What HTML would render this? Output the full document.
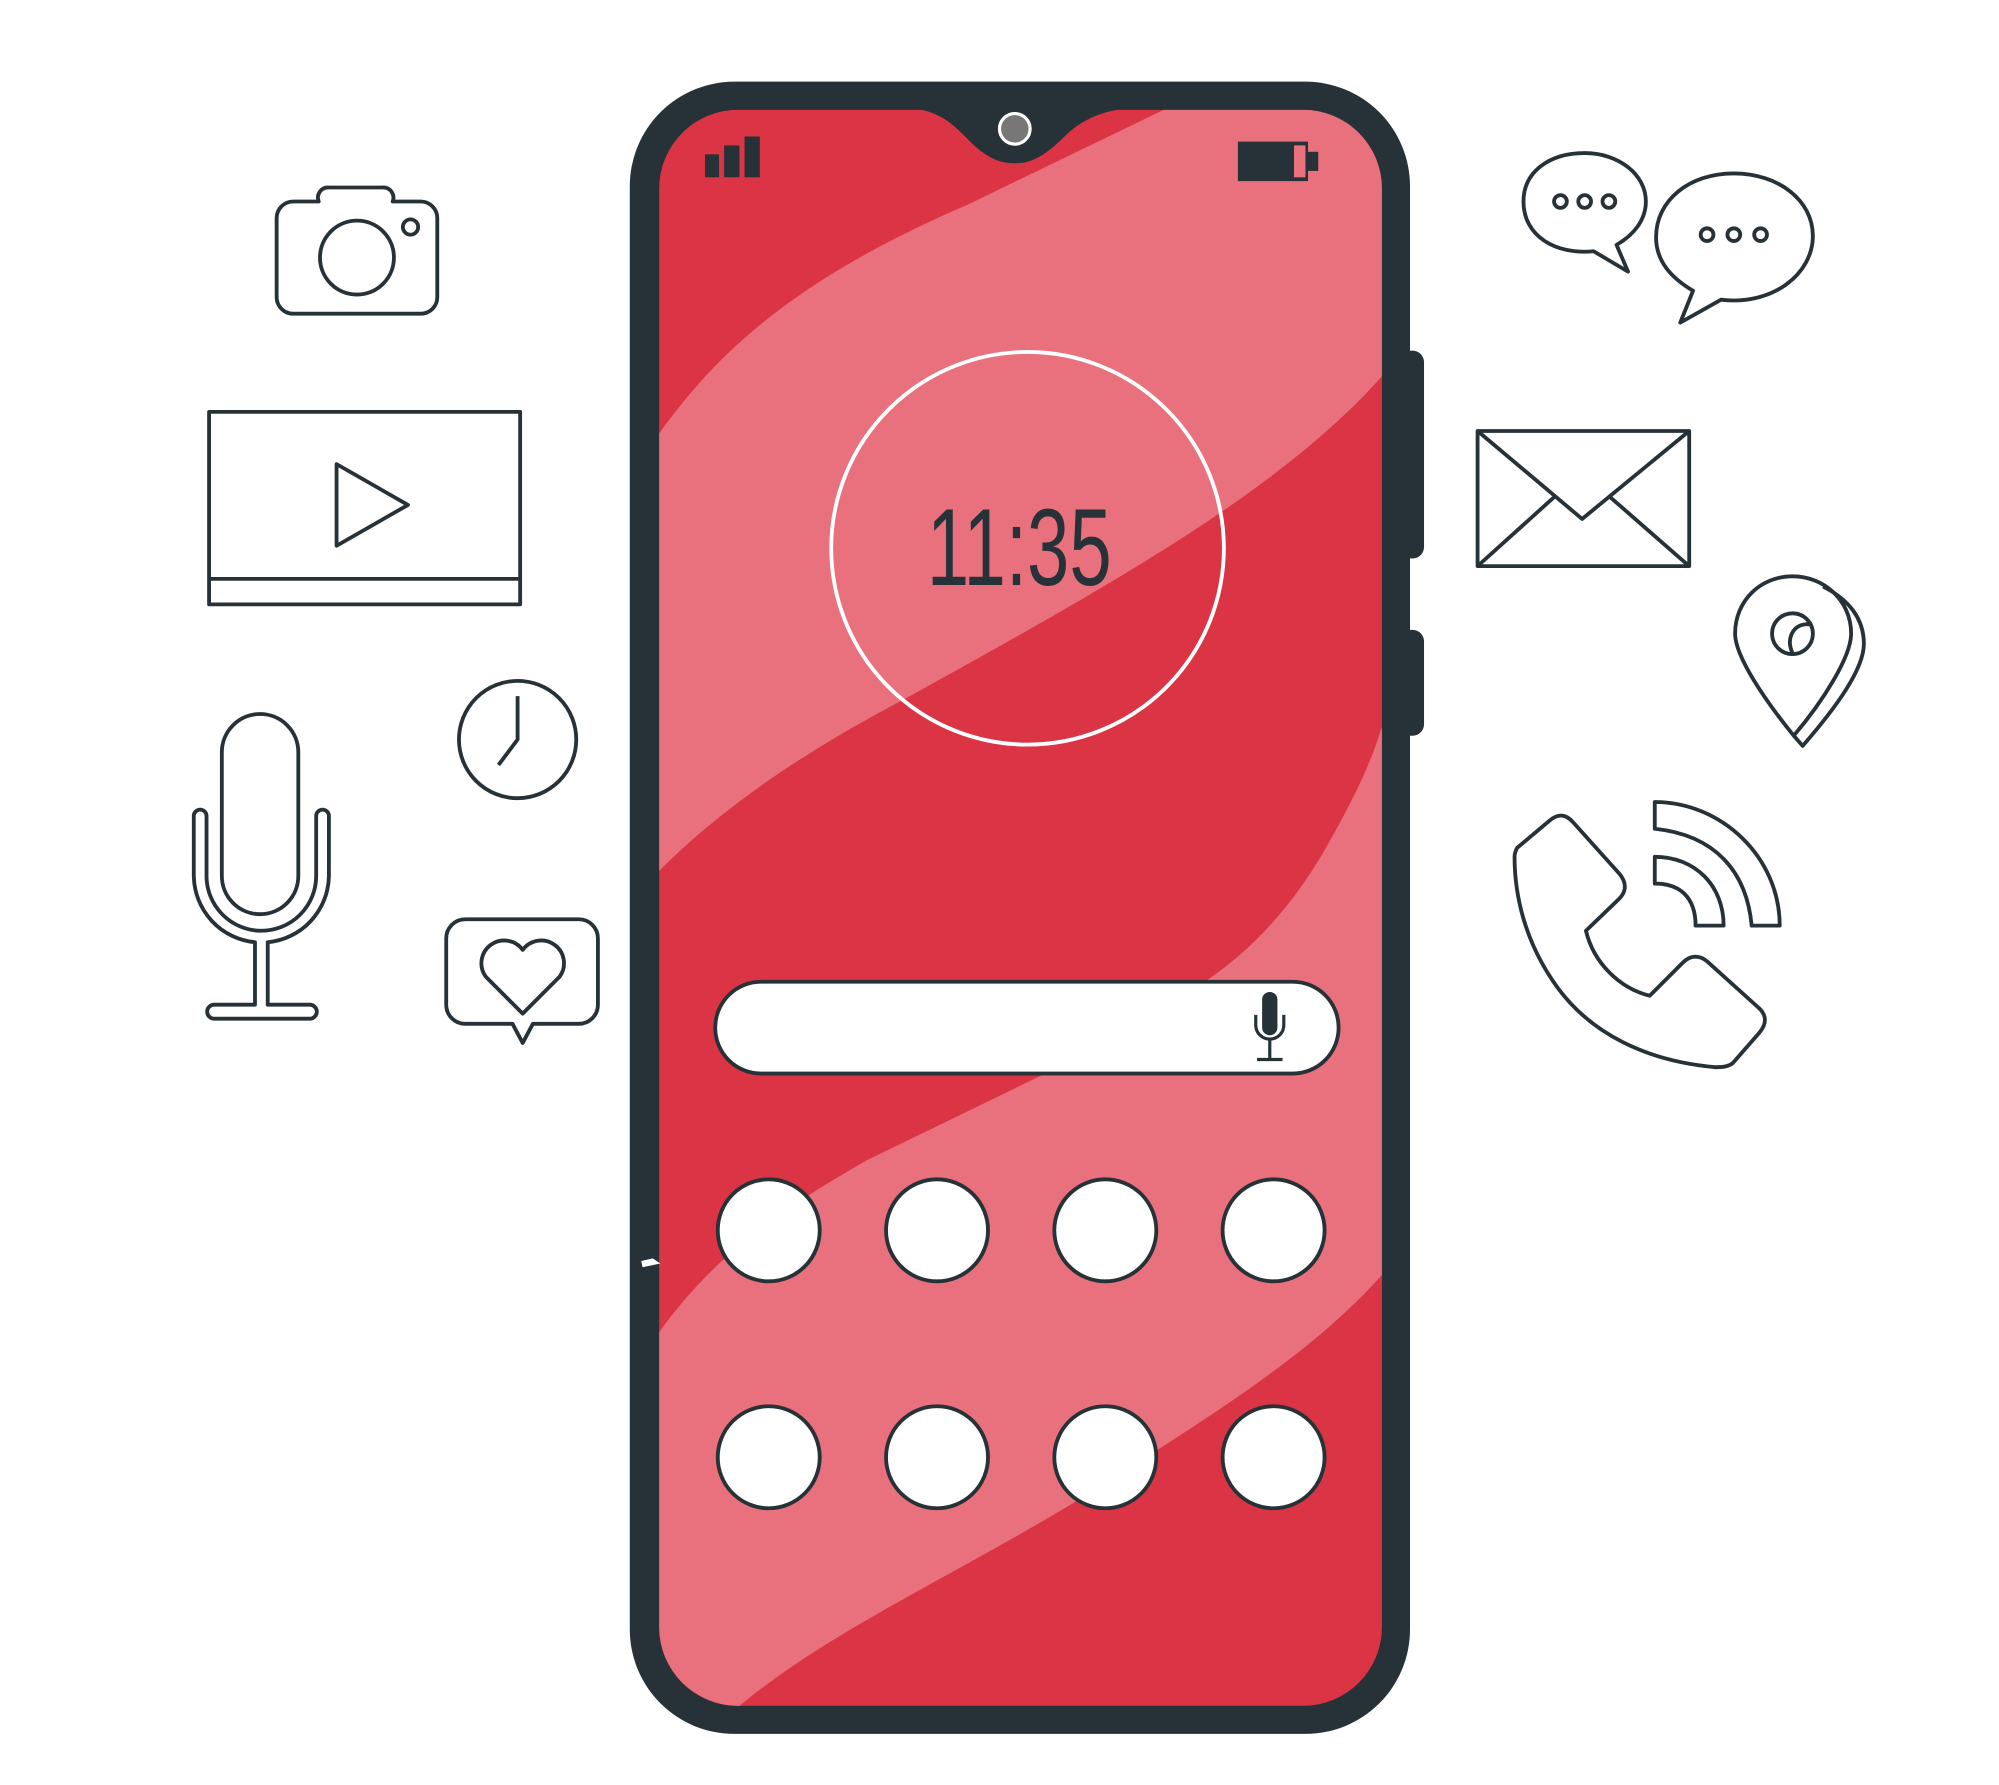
<!DOCTYPE html>
<html><head><meta charset="utf-8"><style>html,body{margin:0;padding:0;background:#fff}svg{display:block}</style></head>
<body>
<svg width="1999" height="1785" viewBox="0 0 1568 1400" xmlns="http://www.w3.org/2000/svg">
<defs><clipPath id="scr"><rect x="517" y="86" width="567" height="1252" rx="62"/></clipPath></defs>
<!-- side buttons -->
<rect x="1098" y="275" width="19" height="163" rx="9" fill="#263238"/>
<rect x="1098" y="494" width="19" height="83" rx="9" fill="#263238"/>
<rect x="494" y="64" width="612" height="1296" rx="82" fill="#263238"/>
<g clip-path="url(#scr)">
<rect x="517" y="86" width="567" height="1252" fill="#db3545"/>
<path d="M517,340 C560,280 620,220 760,160 L913,86 L1084,86 L1084,295 C1000,390 850,470 710,548 C620,595 560,640 517,683 Z" fill="#e8717d"/>
<path d="M517,1045 C560,985 610,950 680,910 L820,842 L945,770 C990,740 1020,700 1040,665 C1060,630 1075,600 1084,570 L1084,1000 C1030,1060 960,1105 840,1180 C740,1240 650,1280 580,1338 L517,1338 Z" fill="#e8717d"/>
</g>
<!-- notch -->
<path d="M700,84 C735,84 745,95 760,110 C775,125 785,128 797,128 C809,128 820,122 835,107 C850,92 870,84 900,84 Z" fill="#263238"/>
<circle cx="796" cy="101" r="12" fill="#777" stroke="#fff" stroke-width="2.5"/>
<!-- status -->
<rect x="553" y="121" width="11" height="18" fill="#263238"/>
<rect x="568" y="114" width="12" height="25" fill="#263238"/>
<rect x="584" y="107" width="12" height="32" fill="#263238"/>
<rect x="971" y="111" width="55" height="31" fill="#263238"/>
<rect x="1026" y="119" width="8" height="15" fill="#263238"/>
<rect x="1015" y="114" width="9" height="25" fill="#e8717d"/>
<!-- clock -->
<circle cx="806" cy="430" r="154" fill="none" stroke="#fff" stroke-width="3"/>
<text x="727" y="459" font-family="Liberation Sans Narrow, Liberation Sans, sans-serif" font-size="86" fill="#263238" textLength="145" lengthAdjust="spacingAndGlyphs">11:35</text>
<!-- search -->
<rect x="561" y="770" width="489" height="72" rx="36" fill="#fff" stroke="#263238" stroke-width="3"/>
<rect x="990" y="778" width="12" height="34" rx="6" fill="#263238"/>
<path d="M985,796 v8 a11,11 0 0 0 22,0 v-8 M996,815 v16 M986,831 h20" fill="none" stroke="#263238" stroke-width="2.5"/>
<!-- apps -->
<g fill="#fff" stroke="#263238" stroke-width="3">
<circle cx="603" cy="965" r="40"/><circle cx="735" cy="965" r="40"/><circle cx="867" cy="965" r="40"/><circle cx="999" cy="965" r="40"/>
<circle cx="603" cy="1143" r="40"/><circle cx="735" cy="1143" r="40"/><circle cx="867" cy="1143" r="40"/><circle cx="999" cy="1143" r="40"/>
</g>
<path d="M503,989 L512,987 L518,991 L504,994 Z" fill="#fff"/>
<!-- left icons -->
<g fill="none" stroke="#263238" stroke-width="3" stroke-linejoin="round">
<path d="M230,158 H250 a8,8 0 0 1 8,-11 H300 a8,8 0 0 1 8,11 H330 a13,13 0 0 1 13,13 V233 a13,13 0 0 1 -13,13 H230 a13,13 0 0 1 -13,-13 V171 a13,13 0 0 1 13,-13 Z"/>
<circle cx="280" cy="202" r="29"/><circle cx="322" cy="178" r="6"/>
<rect x="164" y="323" width="244" height="151"/><line x1="164" y1="454" x2="408" y2="454"/>
<path d="M264,364 L320,396 L264,428 Z"/>
<circle cx="406" cy="580" r="46"/><path d="M406,546 V580 L391,600"/>
<path d="M174,590 a30,30 0 0 1 60,0 V687 a30,30 0 0 1 -60,0 Z"/>
<path d="M152,640 a5,5 0 0 1 10,0 V687 a43,43 0 0 0 86,0 V640 a5,5 0 0 1 10,0 V687 a53,53 0 0 1 -48,52 V788 H243 a5,5 0 0 1 0,11 H168 a5,5 0 0 1 0,-11 H200 V739 a53,53 0 0 1 -48,-52 Z"/>
<path d="M365,721 H454 a15,15 0 0 1 15,15 V788 a15,15 0 0 1 -15,15 H418 L410,818 L402,803 H365 a15,15 0 0 1 -15,-15 V736 a15,15 0 0 1 15,-15 Z"/>
<path d="M410,795 L381,766 a17,17 0 0 1 29,-21 a17,17 0 0 1 29,21 Z"/>
</g>
<!-- right icons -->
<g fill="none" stroke="#263238" stroke-width="3" stroke-linejoin="round">
<path d="M1250,197 C1220,200 1195,185 1195,158 C1195,135 1215,120 1243,120 C1270,120 1291,137 1291,158 C1291,172 1282,184 1268,192 L1277,213 Z"/>
<circle cx="1224" cy="158" r="5"/><circle cx="1243" cy="158" r="5"/><circle cx="1262" cy="158" r="5"/>
<path d="M1350,235 C1390,240 1422,215 1422,185 C1422,157 1395,136 1360,136 C1325,136 1299,157 1299,186 C1299,205 1311,218 1328,228 L1318,253 Z"/>
<circle cx="1339" cy="184" r="5"/><circle cx="1360" cy="184" r="5"/><circle cx="1381" cy="184" r="5"/>
<rect x="1159" y="338" width="166" height="106"/>
<path d="M1159,338 L1241,407 L1325,338 M1159,444 L1220,389 M1325,444 L1262,389"/>
<path d="M1430,460 C1450,470 1462,485 1462,505 C1462,525 1440,555 1414,585 L1407,577"/>
<path d="M1407,577 C1385,550 1361,515 1361,497 C1361,471 1381,452 1406,452 C1431,452 1452,471 1452,497 C1452,515 1430,550 1407,577 Z"/>
<circle cx="1406" cy="497" r="16"/><path d="M1406,512 C1400,500 1408,487 1421,490"/>
<path d="M1190,665 L1215,644 C1222,638 1228,638 1234,645 L1270,685 C1276,692 1276,699 1270,705 L1244,730 C1250,755 1270,775 1294,781 L1320,755 C1326,749 1333,749 1339,754 L1379,790 C1386,796 1386,803 1380,810 L1359,834 C1355,837 1350,837 1345,837 C1290,832 1248,810 1222,775 C1195,738 1188,700 1188,672 C1188,669 1189,667 1190,665 Z"/>
<path d="M1298,629 C1350,629 1396,672 1396,726 H1374 C1370,683 1345,655 1298,650 Z"/>
<path d="M1298,672 C1330,672 1352,695 1352,726 H1330 C1330,704 1318,693 1298,693 Z"/>
</g>
</svg>
</body></html>
